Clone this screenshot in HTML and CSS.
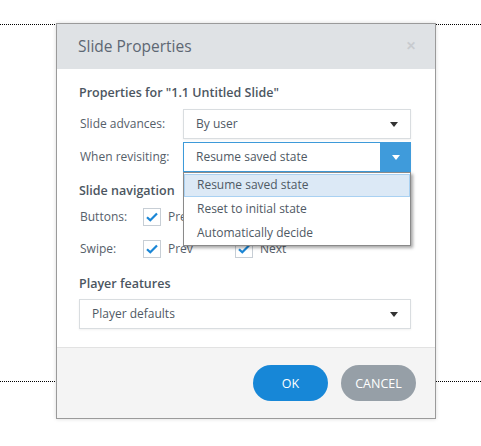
FILE: index.html
```html
<!DOCTYPE html>
<html>
<head>
<meta charset="utf-8">
<link rel="stylesheet" href="styles.css">
</head>
<body>
<div class="stage">
  <div class="dots dots-top"></div>
  <div class="dots dots-bottom"></div>
  <div class="dialog">
    <div class="dlg-header">
      <span class="dlg-title">Slide Properties</span>
      <span class="dlg-close">&#x2715;</span>
    </div>
    <div class="dlg-body">
      <div class="heading h-props">Properties for "1.1 Untitled Slide"</div>
      <div class="row row-adv">
        <span class="label">Slide advances:</span>
        <div class="select">
          <span class="select-text">By user</span>
          <span class="caret"></span>
        </div>
      </div>
      <div class="row row-rev">
        <span class="label">When revisiting:</span>
        <div class="select select-open">
          <span class="select-text">Resume saved state</span>
          <span class="caret-btn"><span class="caret caret-white"></span></span>
          <div class="droplist">
            <div class="opt opt-active">Resume saved state</div>
            <div class="opt">Reset to initial state</div>
            <div class="opt">Automatically decide</div>
          </div>
        </div>
      </div>
      <div class="heading h-nav">Slide navigation</div>
      <div class="row row-check row-buttons">
        <span class="label label-short">Buttons:</span>
        <span class="check"><svg width="12" height="10" viewBox="0 0 12 10"><path d="M1 5.2 L4.3 8.3 L11 1.5" fill="none" stroke="#1a86d6" stroke-width="2.2"/></svg></span>
        <span class="check-text">Prev</span>
        <span class="check"><svg width="12" height="10" viewBox="0 0 12 10"><path d="M1 5.2 L4.3 8.3 L11 1.5" fill="none" stroke="#1a86d6" stroke-width="2.2"/></svg></span>
        <span class="check-text">Next</span>
      </div>
      <div class="row row-check row-swipe">
        <span class="label label-short">Swipe:</span>
        <span class="check"><svg width="12" height="10" viewBox="0 0 12 10"><path d="M1 5.2 L4.3 8.3 L11 1.5" fill="none" stroke="#1a86d6" stroke-width="2.2"/></svg></span>
        <span class="check-text">Prev</span>
        <span class="check"><svg width="12" height="10" viewBox="0 0 12 10"><path d="M1 5.2 L4.3 8.3 L11 1.5" fill="none" stroke="#1a86d6" stroke-width="2.2"/></svg></span>
        <span class="check-text">Next</span>
      </div>
      <div class="heading h-player">Player features</div>
      <div class="select select-wide">
        <span class="select-text">Player defaults</span>
        <span class="caret"></span>
      </div>
    </div>
    <div class="dlg-footer">
      <button class="btn btn-ok">OK</button>
      <button class="btn btn-cancel">CANCEL</button>
    </div>
  </div>
</div>
</body>
</html>
```

FILE: styles.css
```css
html, body {
  margin: 0;
  padding: 0;
  background: #ffffff;
}

body {
  font-family: "Open Sans", "Noto Sans", sans-serif;
  font-size: 12px;
  color: #56606a;
}

.stage {
  position: relative;
  width: 481px;
  height: 446px;
  overflow: hidden;
  padding-top: 23px;
  box-sizing: border-box;
}

.dots {
  position: absolute;
  left: 0;
  right: 0;
  height: 0;
  border-top: 1px dotted #000;
}

.dots-top { top: 24px; }
.dots-bottom { top: 381px; }

.dialog {
  position: relative;
  margin-left: 56px;
  width: 380px;
  height: 396px;
  box-sizing: border-box;
  border: 1px solid #9a9a9a;
  background: #fff;
  box-shadow: 0 0 4px rgba(0, 0, 0, 0.15);
  display: flex;
  flex-direction: column;
}

.dlg-header {
  height: 45px;
  background: #dfe2e5;
  display: flex;
  align-items: center;
  justify-content: space-between;
  padding: 0 21px 0 21px;
  flex-shrink: 0;
}

.dlg-title {
  font-size: 15.5px;
  color: #5d6773;
  margin-top: -2px;
}

.dlg-close {
  font-size: 12px;
  color: #c8cbcf;
  font-weight: bold;
  margin-right: -2px;
  margin-top: -2px;
}

.dlg-body {
  flex: 1;
  padding: 0 24px 0 22px;
}

.heading {
  font-weight: 600;
  font-size: 12.5px;
  color: #4c5661;
}

.h-props { margin-top: 14px; height: 20px; line-height: 20px; }
.h-nav { margin-top: 9px; height: 20px; line-height: 20px; }
.h-player { margin-top: 12px; height: 20px; line-height: 20px; }

.row {
  display: flex;
  align-items: center;
  padding-left: 1px;
}

.row-adv { margin-top: 6px; }
.row-rev { margin-top: 3px; }

.label {
  width: 103px;
  flex-shrink: 0;
  padding-bottom: 2px;
}

.label-short { width: 63px; }

.select {
  position: relative;
  flex: 1;
  height: 30px;
  box-sizing: border-box;
  border: 1px solid #d9dde0;
  box-shadow: 0 1px 2px rgba(0, 0, 0, 0.06);
  display: flex;
  align-items: center;
  justify-content: space-between;
  background: #fff;
  color: #4f5964;
}

.select-text {
  padding-left: 12px;
  padding-bottom: 2px;
}

.caret {
  width: 0;
  height: 0;
  border-left: 4.5px solid transparent;
  border-right: 4.5px solid transparent;
  border-top: 5px solid #333;
  margin-right: 12px;
}

.caret-white {
  border-top-color: #fff;
  margin-right: 0;
}

.select-open {
  border-color: #3d9ad9;
}

.caret-btn {
  align-self: stretch;
  width: 31px;
  margin: -1px -1px -1px 0;
  background: #3f9bdb;
  display: flex;
  align-items: center;
  justify-content: center;
}

.droplist {
  position: absolute;
  left: -1px;
  right: -1px;
  top: 29px;
  height: 74px;
  box-sizing: border-box;
  background: #fff;
  border: 1px solid #8a8a8a;
  box-shadow: 2px 2px 3px rgba(0, 0, 0, 0.35);
  z-index: 2;
  padding-top: 1px;
}

.opt {
  height: 24px;
  line-height: 21px;
  padding-left: 13px;
  box-sizing: border-box;
  color: #4f5964;
}

.opt-active {
  background: #dce9f6;
  border: 1px solid #a9d1f2;
  padding-left: 12px;
  line-height: 19px;
  height: 23px;
  margin-bottom: 1px;
}

.row-check {
  height: 26px;
}

.row-buttons { margin-top: 3px; }
.row-swipe { margin-top: 6px; }

.check {
  width: 18px;
  height: 18px;
  box-sizing: border-box;
  border: 1px solid #c7ced5;
  display: flex;
  align-items: center;
  justify-content: center;
  flex-shrink: 0;
  background: #fff;
}

.check-text {
  margin-left: 7px;
  width: 67px;
  padding-bottom: 2px;
}

.select-wide {
  margin-top: 5px;
  height: 30px;
  flex: none;
}

.dlg-footer {
  height: 71px;
  box-sizing: border-box;
  border-top: 1px solid #e2e2e2;
  background: #f4f4f4;
  display: flex;
  align-items: center;
  justify-content: flex-end;
  gap: 13px;
  padding: 0 19px 0 0;
  flex-shrink: 0;
}

.btn {
  width: 75px;
  height: 36px;
  border: none;
  border-radius: 18px;
  font-family: "Open Sans", "Noto Sans", sans-serif;
  font-size: 12.5px;
  color: #fff;
  padding: 0;
}

.btn-ok { background: #1787d7; }
.btn-cancel { background: #969fa7; }
```
